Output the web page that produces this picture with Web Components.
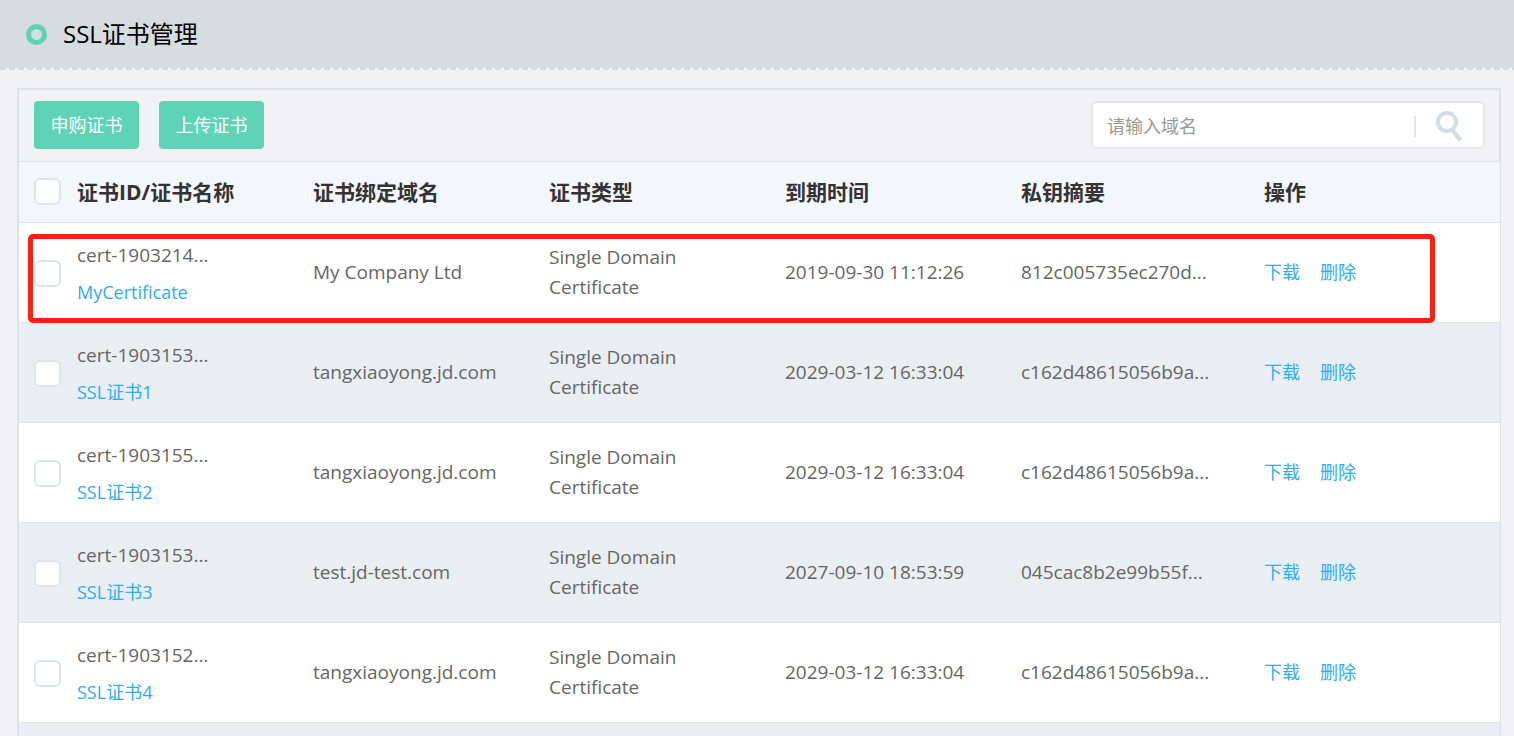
<!DOCTYPE html>
<html lang="zh-CN">
<head>
<meta charset="utf-8">
<title>SSL证书管理</title>
<style>
  body {
    margin: 0;
    background: #f2f2f4;
    color: #666;
    font: 18px/30px "Open Sans", "Noto Sans CJK SC", sans-serif;
  }
</style>
</head>
<body>
<cert-page></cert-page>

<script>
class BaseElement extends HTMLElement {
  constructor() {
    super();
    this.attachShadow({ mode: "open" }).innerHTML = this.render();
  }
}

customElements.define("page-header", class extends BaseElement {
  render() {
    return `
      <style>
        :host { display: block; }
        .bar {
          display: flex;
          align-items: center;
          gap: 16px;
          height: 68px;
          padding-left: 26px;
          background: #d5dde0;
        }
        .dashes {
          height: 2px;
          background: repeating-linear-gradient(90deg, #d3dbe4 0 6px, #f2f4f8 6px 9px);
        }
        .ring {
          box-sizing: border-box;
          width: 21px;
          height: 21px;
          border: 5px solid #5fd3b5;
          border-radius: 50%;
        }
        h1 { margin: 0; font-size: 24px; font-weight: 400; line-height: 36px; color: #000; }
      </style>
      <div class="bar">
        <span class="ring"></span>
        <h1><slot></slot></h1>
      </div>
      <div class="dashes"></div>`;
  }
});

customElements.define("action-button", class extends BaseElement {
  render() {
    return `
      <style>
        :host { display: block; }
        button {
          display: block;
          min-width: 105px;
          height: 48px;
          padding: 0 16px;
          border: 0;
          border-radius: 4px;
          background: #5fd3b5;
          color: #fff;
          font: inherit;
          cursor: pointer;
        }
      </style>
      <button type="button"><slot></slot></button>`;
  }
});

customElements.define("search-box", class extends BaseElement {
  render() {
    return `
      <style>
        :host {
          box-sizing: border-box;
          display: flex;
          align-items: center;
          width: 394px;
          height: 48px;
          padding-top: 2px;
          border: 2px solid #e6e6e8;
          border-radius: 6px;
          background: #fff;
        }
        input {
          flex: 1;
          min-width: 0;
          padding: 0 14px;
          border: 0;
          outline: 0;
          background: none;
          color: #666;
          font: inherit;
        }
        input::placeholder { color: #999; opacity: 1; }
        button {
          display: flex;
          justify-content: center;
          align-items: center;
          width: 69px;
          height: 21px;
          padding: 0;
          border: 0;
          border-left: 2px solid #e6e6e8;
          background: none;
          cursor: pointer;
        }
        svg { flex: none; }
      </style>
      <input type="text" placeholder="请输入域名" aria-label="请输入域名">
      <button type="button" aria-label="搜索">
        <svg width="30" height="32" viewBox="0 0 30 32" fill="none" stroke="#d3dde8">
          <circle cx="12" cy="12" r="9" stroke-width="4"/>
          <path d="M17.5 20L25.5 30.5" stroke-width="4.5"/>
        </svg>
      </button>`;
  }
});

customElements.define("tick-box", class extends BaseElement {
  render() {
    return `
      <style>
        :host { display: block; width: 27px; height: 27px; }
        input {
          appearance: none;
          box-sizing: border-box;
          display: block;
          width: 27px;
          height: 27px;
          margin: 0;
          border: 2px solid #dce5ec;
          border-radius: 6px;
          background: #fff;
        }
        input:checked { background: #5fd3b5; }
      </style>
      <input type="checkbox" aria-label="选择">`;
  }
});

customElements.define("text-link", class extends BaseElement {
  render() {
    return `
      <style>
        :host { display: inline-block; font-size: 18px; }
        a { color: #2eabff; text-decoration: none; }
      </style>
      <a href="#"><slot></slot></a>`;
  }
});

customElements.define("row-highlight", class extends BaseElement {
  render() {
    return `
      <style>
        :host {
          position: absolute;
          inset: 11px 65px 0 9px;
          border: 5px solid #ff1e10;
          border-radius: 5px;
          pointer-events: none;
        }
      </style>`;
  }
});

const certificates = [
  { id: "cert-1903214...", name: "MyCertificate", domain: "My Company Ltd", expires: "2019-09-30 11:12:26", digest: "812c005735ec270d...", marked: true },
  { id: "cert-1903153...", name: "SSL证书1", domain: "tangxiaoyong.jd.com", expires: "2029-03-12 16:33:04", digest: "c162d48615056b9a..." },
  { id: "cert-1903155...", name: "SSL证书2", domain: "tangxiaoyong.jd.com", expires: "2029-03-12 16:33:04", digest: "c162d48615056b9a..." },
  { id: "cert-1903153...", name: "SSL证书3", domain: "test.jd-test.com", expires: "2027-09-10 18:53:59", digest: "045cac8b2e99b55f..." },
  { id: "cert-1903152...", name: "SSL证书4", domain: "tangxiaoyong.jd.com", expires: "2029-03-12 16:33:04", digest: "c162d48615056b9a..." }
];

customElements.define("cert-table", class extends BaseElement {
  render() {
    const rows = certificates.map(c => `
      <tr>
        <td class="tick"><tick-box></tick-box>${c.marked ? "<row-highlight></row-highlight>" : ""}</td>
        <td class="id"><div class="name"><span>${c.id}</span><text-link>${c.name}</text-link></div></td>
        <td>${c.domain}</td>
        <td class="type">Single Domain Certificate</td>
        <td>${c.expires}</td>
        <td>${c.digest}</td>
        <td><div class="actions"><text-link>下载</text-link><text-link>删除</text-link></div></td>
      </tr>`).join("");
    return `
      <style>
        :host { display: block; border-right: 1px solid #dbe3ea; }
        table { width: 100%; table-layout: fixed; border-spacing: 0; }
        .c-tick { width: 58px; }
        .c-data { width: 236px; }
        .c-digest { width: 243px; }
        .c-actions { width: 236px; }
        th, td {
          box-sizing: border-box;
          padding: 0 0 2px;
          border-bottom: 1px solid #dbe3ea;
          text-align: left;
          vertical-align: middle;
        }
        th { height: 61px; padding-bottom: 0; background: #f3f6fb; color: #333; font-size: 21px; font-weight: 700; }
        th.tick { padding: 0 0 2px 15px; }
        tbody tr { position: relative; background: #fff; }
        tbody tr:nth-child(even) { background: #e9eef2; }
        td { height: 100px; font-size: 19px; }
        td.tick { padding: 2px 0 0 15px; }
        td.id { padding: 2px 0 0; }
        td.type { padding-right: 80px; }
        .name { display: flex; flex-direction: column; align-items: flex-start; gap: 7px; }
        .actions { display: flex; gap: 20px; }
      </style>
      <table>
        <colgroup>
          <col class="c-tick"><col class="c-data"><col class="c-data"><col class="c-data">
          <col class="c-data"><col class="c-digest"><col class="c-actions">
        </colgroup>
        <thead>
          <tr>
            <th class="tick"><tick-box></tick-box></th>
            <th>证书ID/证书名称</th>
            <th>证书绑定域名</th>
            <th>证书类型</th>
            <th>到期时间</th>
            <th>私钥摘要</th>
            <th>操作</th>
          </tr>
        </thead>
        <tbody>${rows}<tr><td colspan="7"></td></tr></tbody>
      </table>`;
  }
});

customElements.define("cert-page", class extends BaseElement {
  render() {
    return `
      <style>
        :host { display: block; height: 100vh; overflow: hidden; }
        main {
          margin: 18px 13px 0 17px;
          border: solid #dbe3ea;
          border-width: 2px 0 0 2px;
        }
        .toolbar {
          display: flex;
          gap: 20px;
          padding: 11px 14px 12px 15px;
          border: solid #dbe3ea;
          border-width: 0 2px 1px 0;
        }
        search-box { margin-left: auto; }
      </style>
      <page-header>SSL证书管理</page-header>
      <main>
        <div class="toolbar">
          <action-button>申购证书</action-button>
          <action-button>上传证书</action-button>
          <search-box></search-box>
        </div>
        <cert-table></cert-table>
      </main>`;
  }
});
</script>
</body>
</html>
